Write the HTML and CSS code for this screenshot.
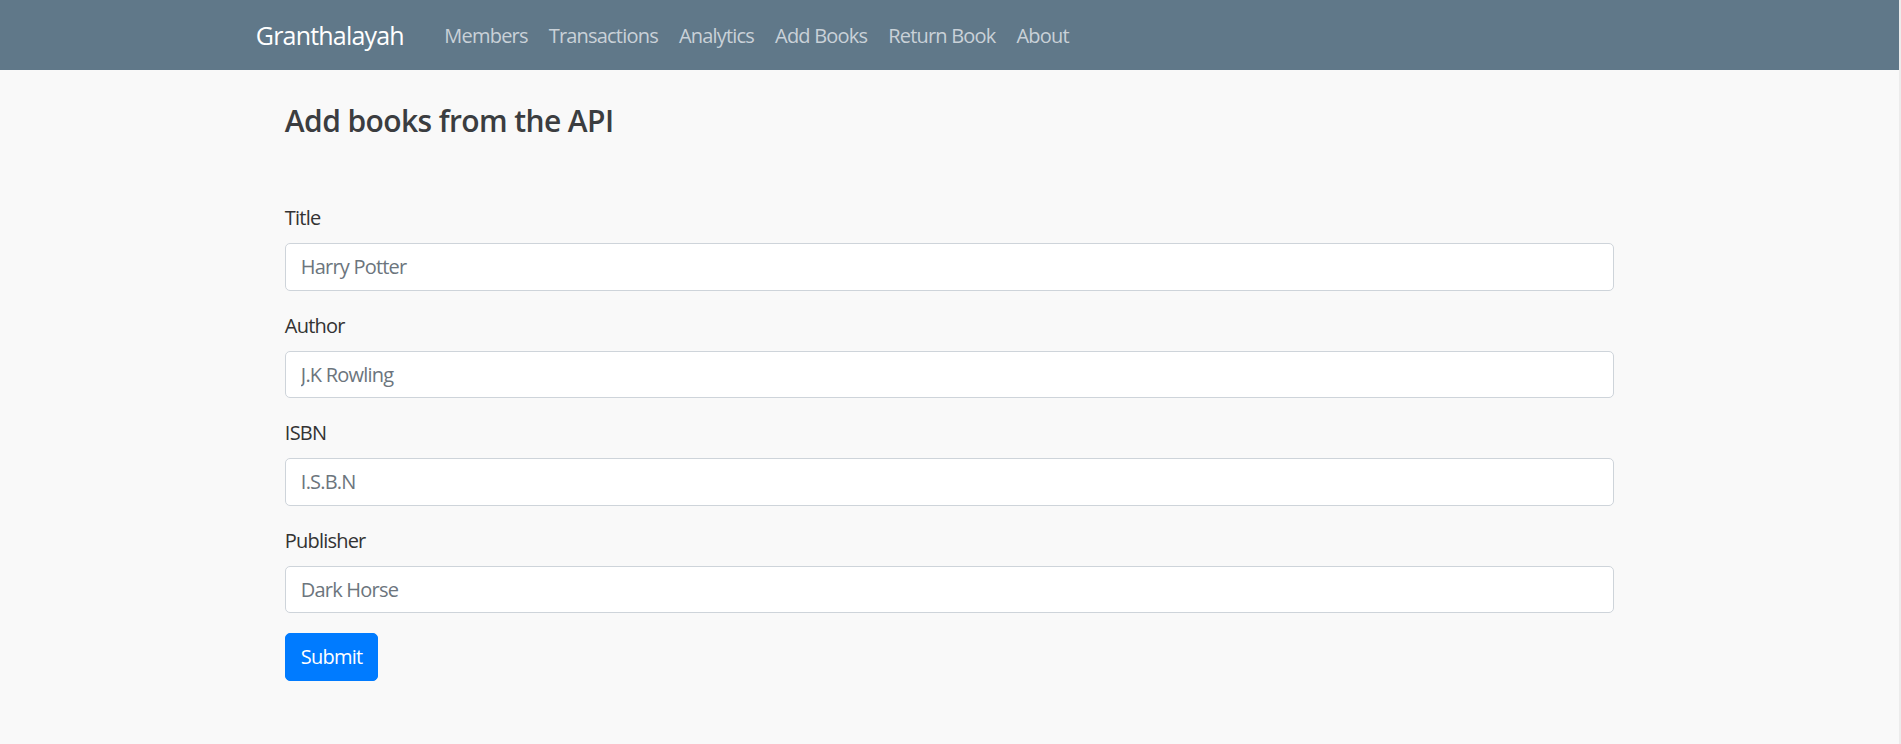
FILE: index.html
```html
<!DOCTYPE html>
<html lang="en">
<head>
<meta charset="utf-8">
<title>Granthalayah - Add Books</title>
<link rel="stylesheet" href="styles.css">
</head>
<body>
<div class="page">
  <nav class="navbar">
    <div class="nav-inner">
      <a class="brand" href="#">Granthalayah</a>
      <ul class="nav-links">
        <li><a href="#">Members</a></li>
        <li><a href="#">Transactions</a></li>
        <li><a href="#">Analytics</a></li>
        <li><a href="#">Add Books</a></li>
        <li><a href="#">Return Book</a></li>
        <li><a href="#">About</a></li>
      </ul>
    </div>
  </nav>
  <main class="content">
    <h4 class="title">Add books from the API</h4>
    <form class="book-form">
      <div class="form-group">
        <label for="title">Title</label>
        <input id="title" type="text" placeholder="Harry Potter">
      </div>
      <div class="form-group">
        <label for="author">Author</label>
        <input id="author" type="text" placeholder="J.K Rowling">
      </div>
      <div class="form-group">
        <label for="isbn">ISBN</label>
        <input id="isbn" type="text" placeholder="I.S.B.N">
      </div>
      <div class="form-group">
        <label for="publisher">Publisher</label>
        <input id="publisher" type="text" placeholder="Dark Horse">
      </div>
      <button type="submit" class="btn-submit">Submit</button>
    </form>
  </main>
</div>
</body>
</html>
```

FILE: styles.css
```css
* { box-sizing: border-box; }

html, body {
  margin: 0;
  padding: 0;
  background: #ececec;
}

body {
  font-family: "Open Sans", "Noto Sans", sans-serif;
  font-size: 20px;
  line-height: 1.5;
  letter-spacing: -0.04em;
  color: #212529;
}

.page {
  margin-right: 2px;
  min-height: 100vh;
  background: #f9f9f9;
}

.navbar {
  height: 70px;
  padding-top: 2px;
  background: #607889;
  display: flex;
  align-items: center;
}

.nav-inner {
  width: 1425px;
  margin: 0 auto;
  padding: 0 18.75px;
  display: flex;
  align-items: center;
}

.brand {
  font-size: 25px;
  color: #ffffff;
  text-decoration: none;
  margin-right: 30px;
  line-height: 1.5;
}

.nav-links {
  list-style: none;
  margin: 0;
  padding: 0;
  display: flex;
  align-items: center;
}

.nav-links a {
  display: block;
  padding: 10px 10.5px;
  font-size: 20px;
  color: #c9d1d8;
  text-decoration: none;
}

.content {
  width: 70%;
  margin: 0 auto;
  padding-top: 33px;
}

.title {
  margin: 0 0 64px;
  font-size: 30px;
  font-weight: 600;
  line-height: 1.2;
  letter-spacing: -0.02em;
  color: #3b3d40;
}

.form-group {
  margin-bottom: 20px;
}

.form-group label {
  display: block;
  margin-bottom: 10px;
  color: #333333;
}

.form-group input {
  display: block;
  width: 100%;
  height: 47.5px;
  padding: 7.5px 15px;
  font-family: inherit;
  font-size: 20px;
  letter-spacing: -0.04em;
  color: #495057;
  background: #ffffff;
  border: 1px solid #ced4da;
  border-radius: 5px;
  outline: none;
}

.form-group input::placeholder {
  color: #6c757d;
  opacity: 1;
}

.btn-submit {
  display: inline-block;
  height: 48px;
  padding: 0 15px;
  font-family: inherit;
  font-size: 20px;
  letter-spacing: -0.04em;
  line-height: 1.5;
  color: #ffffff;
  background: #007bff;
  border: 1px solid #007bff;
  border-radius: 5px;
  cursor: pointer;
}
```
